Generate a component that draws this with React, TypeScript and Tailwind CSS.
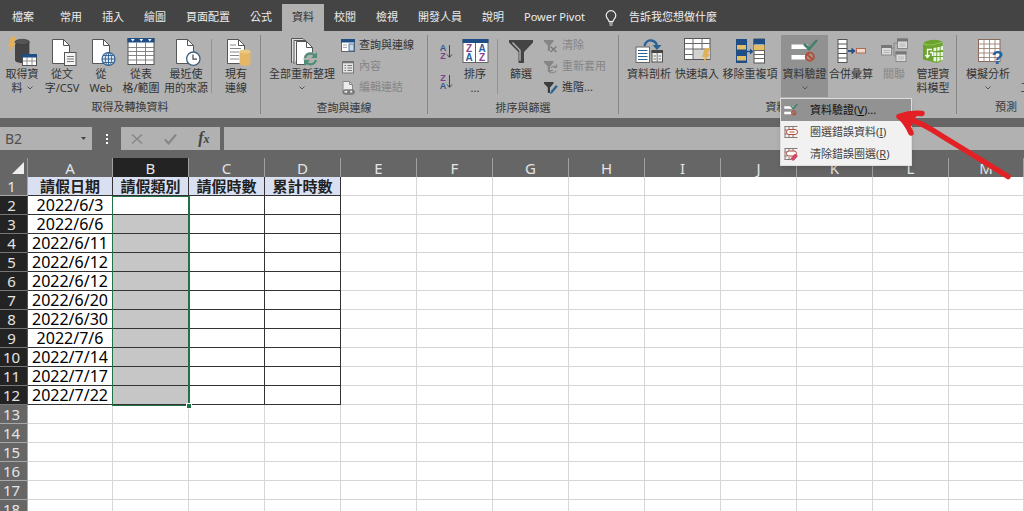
import React from 'react';
import clsx from 'clsx';

const BLUE = '#1f4e86';
const EDGE = '#555';

/* ---------- shared icon parts ---------- */

const Page = ({ x = 5, y = 2, w = 18, h = 25 }: { x?: number; y?: number; w?: number; h?: number }) => (
    <g fill="#fff" stroke={EDGE} strokeWidth="1">
        <path d={`M${x + 0.5} ${y + 0.5}h${w - 7}l6 6v${h - 7}h-${w - 1}z`} />
        <path d={`M${x + w - 6.5} ${y + 0.5}v6h6`} fill="none" />
    </g>
);

const Bolt = ({ x, y }: { x: number; y: number }) => (
    <path transform={`translate(${x} ${y})`} d="M3 0h5.5L5.5 6H8L0.5 16.5 3 9H0z" fill="#e3b155" />
);

const Big = ({ children }: { children: React.ReactNode }) => (
    <svg width="30" height="30" viewBox="0 0 30 30" className="shrink-0 overflow-visible" aria-hidden="true">
        {children}
    </svg>
);

const Small = ({ children }: { children: React.ReactNode }) => (
    <svg width="14" height="14" viewBox="0 0 14 14" className="shrink-0 overflow-visible" aria-hidden="true">
        {children}
    </svg>
);

/* ---------- large icons ---------- */

const GetDataIcon = () => (
    <Big>
        <path d="M8 5v18c0 1.8 3.2 3 7.2 3s7.2-1.2 7.2-3V5z" fill="#444" />
        <ellipse cx="15.2" cy="5" rx="7.2" ry="2.7" fill="#555" stroke="#333" strokeWidth=".6" />
        <Bolt x={1} y={0} />
        <rect x="15.5" y="17.5" width="14" height="11" fill="#fff" stroke={EDGE} />
        <rect x="15" y="17" width="15" height="3.5" fill={BLUE} />
        <path d="M20 20v8M25 20v8M16 24h13" stroke="#777" strokeWidth=".8" />
    </Big>
);

const CsvIcon = () => (
    <Big>
        <Page />
        <rect x="17.5" y="15.5" width="11.5" height="13" fill="#f4f4f4" stroke={EDGE} />
        <path d="M20 19.5h7M20 22h7M20 24.5h7" stroke="#777" />
    </Big>
);

const WebIcon = () => (
    <Big>
        <Page x={6} />
        <circle cx="22.5" cy="22" r="6.5" fill="#dfe8f0" stroke="#2c5f92" strokeWidth="1.2" />
        <path d="M16 22h13M22.5 15.5v13M17.5 18.5h10M17.5 25.5h10" stroke="#2c5f92" strokeWidth=".9" />
        <ellipse cx="22.5" cy="22" rx="3.2" ry="6.5" fill="none" stroke="#2c5f92" strokeWidth=".9" />
    </Big>
);

const TableIcon = () => (
    <Big>
        <rect x="2" y="1.5" width="26" height="26" fill="#fff" stroke={EDGE} />
        <rect x="1.5" y="1" width="27" height="4.5" fill={BLUE} />
        <path d="M5 2h3.6L6.8 4.5zM13.5 2h3.6l-1.8 2.5zM22 2h3.6l-1.8 2.5z" fill="#fff" />
        <path d="M10.5 5.5v22M19.5 5.5v22M2 10.5h26M2 14.5h26M2 18.5h26M2 23h26" stroke="#777" strokeWidth=".9" />
    </Big>
);

const RecentIcon = () => (
    <Big>
        <Page />
        <circle cx="22.3" cy="21.7" r="6.7" fill="#fff" stroke="#3f607f" strokeWidth="1.3" />
        <path d="M22 17.5v4.7h4" fill="none" stroke="#444" strokeWidth="1.2" />
    </Big>
);

const ExistingIcon = () => (
    <Big>
        <Page x={6} />
        <path d="M9 8h6M9 11.5h11M9 15h9M9 18.5h9M9 22h9" stroke="#888" />
        <path d="M18.5 14.5v12c0 1.4 2.5 2.4 5.5 2.4s5.5-1 5.5-2.4v-12z" fill="#e3b766" />
        <ellipse cx="24" cy="14.5" rx="5.5" ry="2" fill="#eac983" />
    </Big>
);

const RefreshAllIcon = () => (
    <Big>
        <path d="M4.500 26V1.500H16l3 3" fill="#ddd" stroke={EDGE} />
        <path d="M7 27V3.500h12" fill="#eee" stroke={EDGE} />
        <Page x={9} y={4} w={17} h={24} />
        <circle cx="23.5" cy="22" r="7" fill="#b1b1b1" />
        <path d="M18 21c.8-3 3-4.300 5.500-4.300 1.800 0 3 .7 4 1.800M29 23c-.8 3-3 4.300-5.500 4.300-1.800 0-3-.7-4-1.800" fill="none" stroke="#4f8f76" strokeWidth="2.2" />
        <path d="M30 15v6h-6zM17 29v-6h6z" fill="#4f8f76" />
    </Big>
);

const SortIcon = () => (
    <Big>
        <rect x="3" y="3" width="25" height="22.5" fill="#fff" stroke="#666" />
        <rect x="2.5" y="2" width="26" height="4" fill={BLUE} />
        <path d="M15.5 6v19.5" stroke="#666" />
        <g fontFamily="Liberation Sans, sans-serif" fontSize="10" fontWeight="bold" textAnchor="middle">
            <text x="9" y="14.5" fill="#8a4596">Z</text>
            <text x="9" y="23.5" fill="#2c5f9e">A</text>
            <text x="22" y="14.5" fill="#2c5f9e">A</text>
            <text x="22" y="23.5" fill="#8a4596">Z</text>
        </g>
    </Big>
);

const SortOrderIcon = ({ top, bottom }: { top: string; bottom: string }) => (
    <svg width="14" height="18" viewBox="0 0 14 18" aria-hidden="true">
        <g fontFamily="Liberation Sans, sans-serif" fontSize="9" fontWeight="bold" textAnchor="middle">
            <text x="4" y="8" fill={top === 'A' ? '#33588f' : '#7d4289'}>{top}</text>
            <text x="4" y="16" fill={bottom === 'A' ? '#33588f' : '#7d4289'}>{bottom}</text>
        </g>
        <path d="M10.5 2v12M8 11.5l2.5 2.8 2.5-2.8" fill="none" stroke="#444" />
    </svg>
);

const FilterIcon = () => (
    <Big>
        <path d="M3 3h24v2.500L18 15v11h-5.500V15L3 5.500z" fill="#444" />
        <path d="M6.500 5.500l7.500 7.800v10.500" fill="none" stroke="#b9b9b9" strokeWidth="1.3" />
    </Big>
);

const TextToColumnsIcon = () => (
    <Big>
        <path d="M10.5 9c1-4 4-6 7-5.5s5 2.5 5.500 5.500" fill="none" stroke="#2c6296" strokeWidth="2.4" />
        <path d="M18.5 8h9L23 13z" fill="#2c6296" />
        <rect x="2" y="10" width="13.5" height="15.5" fill="#fff" stroke="#666" />
        <path d="M4 13.5h9.5M4 16.5h9.5M4 19.5h9.5M4 22.5h9.5" stroke="#2c6296" />
        <rect x="18" y="14" width="10.5" height="11" fill="#eee" stroke={EDGE} />
        <rect x="17.5" y="13" width="11.5" height="3" fill="#444" />
        <path d="M23.2 16v9M19.5 19h2.5M19.5 22h2.5M24.5 19H27M24.5 22H27" stroke="#777" />
    </Big>
);

const FlashFillIcon = () => (
    <Big>
        <rect x="2.5" y="1.5" width="25.5" height="21" fill="#fff" stroke={EDGE} />
        <path d="M11 12h17v10H11z" fill="#d2d2d2" />
        <path d="M11 1.5v21M20 1.5V12M2.5 6.5H28M2.5 12H28M2.5 17.5H11" stroke="#666" />
        <Bolt x={20} y={11} />
    </Big>
);

const RemoveDuplicatesIcon = () => (
    <Big>
        <rect x="1" y="2" width="11" height="24" fill={BLUE} />
        <path d="M2 8h9v4.5H2zM2 19h9v4.5H2z" fill="#e6bd67" />
        <path d="M12 14.5h5" stroke="#1f4e86" strokeWidth="1.5" />
        <path d="M15 11.5l3.5 3-3.5 3z" fill="#1f4e86" />
        <rect x="19" y="2" width="10.5" height="24" fill="#fff" stroke="#555" />
        <rect x="18.5" y="2" width="11.5" height="5.5" fill={BLUE} />
        <path d="M19 8h10.5v5H19z" fill="#e6bd67" />
        <path d="M19 13.5h10.5M19 17.5h10.5M19 21.5h10.5" stroke="#666" />
    </Big>
);

const ValidationShape = () => (
    <>
        <path d="M1.500 7.500h16v4.500h-16zM1.500 18h14v4.500h-14z" fill="#fff" />
        <path d="M14 7l5 5 8-9" fill="none" stroke="#43806a" strokeWidth="2.6" />
        <circle cx="19.8" cy="19.8" r="4" fill="#9b9b9b" stroke="#b5503a" strokeWidth="2" />
        <path d="M17 17l5.5 5.5" stroke="#b5503a" strokeWidth="2" />
    </>
);

const ValidationIcon = () => (
    <Big>
        <ValidationShape />
    </Big>
);

const ConsolidateIcon = () => (
    <Big>
        <rect x="2" y="2.5" width="9" height="23" fill="#fff" stroke={EDGE} />
        <path d="M2 7h9M2 11.5h9M2 16.5h9M2 21h9" stroke={EDGE} />
        <path d="M12 14h5" stroke="#1f4e86" strokeWidth="1.8" />
        <path d="M15.5 10.5l4 3.5-4 3.5z" fill="#1f4e86" />
        <rect x="20.5" y="11.5" width="9" height="4.5" fill="#ecd9d0" stroke="#b8664a" />
    </Big>
);

const RelationsIcon = () => (
    <Big>
        <path d="M12 11h3V6h4M15 11v8h3" fill="none" stroke="#888" />
        {[[2.5, 8.5], [18.5, 2], [17, 15]].map(([x, y]) => (
            <g key={x}>
                <rect x={x} y={y} width="10" height="9.5" fill="#dcdcdc" stroke="#888" />
                <rect x={x - 0.5} y={y - 0.5} width="11" height="3" fill="#777" />
                <path d={`M${x + 2} ${y + 5}h6M${x + 2} ${y + 7}h6`} stroke="#b5b5b5" />
            </g>
        ))}
    </Big>
);

const DataModelIcon = () => (
    <Big>
        <path d="M5 6.500C9 2.500 19 1.500 24.500 5v4.500l.5 2v12l-6 2.500L5 22.500z" fill="#6ba32f" />
        <path d="M5 6.500c4 2.500 9 2.500 19.500-1.500" fill="none" stroke="#8fc258" strokeWidth="1.2" />
        <g fill="#eaf4e0">
            <path d="M15.500 11l2.800-.6v3.600l-2.800.3zM19.200 10.200l2.500-.5v3.700l-2.500.3zM22.600 9.500l2.400-.5v4l-2.400.3z" />
            <path d="M15.500 15.300h2.800v3.700h-2.800zM19.200 15.200h2.500v3.800h-2.500zM22.600 15h2.400v4h-2.400z" />
            <path d="M15.500 20h2.800v4.500l-2.800-.6zM19.200 20h2.500v3.800l-2.500.9zM22.600 20h2.400v3l-2.400.7z" />
        </g>
        <path d="M14 12.500H9.500V20M7.500 18l2 2.500 2-2.500M12 15.500h2.500V19" fill="none" stroke="#fff" strokeWidth="1.3" />
    </Big>
);

const WhatIfIcon = () => (
    <Big>
        <rect x="5.5" y="2.5" width="21.5" height="22" fill="#fff" stroke="#8a6a5c" />
        <path d="M11 2.5v22M16.5 2.5v22M22 2.5v22M5.5 7h21.5M5.5 11.5h21.5M5.5 16h21.5M5.5 20.5h21.5" stroke="#9c8277" strokeWidth=".9" />
        <text x="24.5" y="27" fontFamily="Liberation Sans, sans-serif" fontSize="19" fontWeight="bold" textAnchor="middle" fill="#2462a5">?</text>
    </Big>
);

const ForecastIcon = () => (
    <Big>
        <rect x="3.5" y="2.5" width="24" height="22" fill="#fff" stroke={EDGE} />
        <rect x="3" y="2" width="25" height="4" fill="#555" />
        <path d="M4 19l4-4 4 3 5-6" fill="none" stroke="#2c6296" strokeWidth="1.8" />
    </Big>
);

/* ---------- small icons ---------- */

const QueriesIcon = () => (
    <Small>
        <rect x=".5" y="1" width="13" height="11.5" fill="#fff" stroke="#666" />
        <rect x="0" y="0" width="14" height="3.5" fill={BLUE} />
        <rect x="8" y="5" width="5" height="7" fill="#c9d8e6" stroke="#2c6296" strokeWidth=".8" />
        <path d="M2 6h4M2 8.5h4" stroke="#aaa" />
    </Small>
);

const PropertiesIcon = () => (
    <Small>
        <rect x="1.5" y="1.5" width="11" height="11.5" fill="#e4e4e4" stroke="#777" />
        <path d="M1.5 2.5h11" stroke="#777" strokeWidth="1.5" />
        <path d="M3.5 5.5h1.500M3.5 8h1.500M3.5 10.5h1.500M6.5 5.5H11M6.5 8H11M6.5 10.5H11" stroke="#777" />
    </Small>
);

const EditLinksIcon = () => (
    <Small>
        <path d="M2 12V.5h6.5l3 3V12z" fill="#ececec" stroke="#888" />
        <path d="M8.5.5v3h3" fill="none" stroke="#888" />
        <g fill="none" stroke="#777" strokeWidth="1.5">
            <rect x="2.5" y="9" width="6" height="4" rx="2" />
            <rect x="7" y="9" width="6" height="4" rx="2" />
        </g>
    </Small>
);

const smallFunnel = 'M0 1h9.5v1.5L6 6.5v5.5H3.8V6.5L0 2.5z';

const ClearIcon = () => (
    <Small>
        <path d={smallFunnel} fill="#858585" />
        <path d="M6.5 7.5l6 5.5M12.5 7.5l-6 5.5" stroke="#7c7c7c" strokeWidth="1.5" />
    </Small>
);

const ReapplyIcon = () => (
    <Small>
        <path d={smallFunnel} fill="#858585" />
        <path d="M12.5 7.5c-1.5-2-4.5-1.5-5.5.5M6.5 11.5c1.5 2 5 1.5 5.5-1M12.5 4.5v3h-3M6 13.5v-3h3" fill="none" stroke="#888" strokeWidth="1.2" />
    </Small>
);

const AdvancedIcon = () => (
    <Small>
        <path d={smallFunnel} fill="#3c3c3c" />
        <path d="M6 13.5l1-3.5 5-6 1.8 1.5-5 6z" fill="#2c6296" />
    </Small>
);

const CircleInvalidIcon = () => (
    <Small>
        <path d="M.5 1.5h13M.5 12.5h13M1 1.5v11M5 1.5v3M9 1.5v3M5 10v2.5M9 10v2.5M.5 5h3M.5 9h3" fill="none" stroke="#8a7b78" />
        <rect x="2.5" y="4.5" width="11" height="5" rx="2.5" fill="#fff" stroke="#b04b3a" />
        <path d="M5.5 7h5" stroke="#b04b3a" />
    </Small>
);

const ClearCirclesIcon = () => (
    <Small>
        <path d="M.5 1.5h13M.5 12.5h7M1 1.5v11M5 1.5v3M9 1.5v3M5 10v2.5M.5 5h3M.5 9h3" fill="none" stroke="#8a7b78" />
        <rect x="2.5" y="4" width="10" height="5" rx="2.5" fill="#fff" stroke="#b04b3a" />
        <path d="M6.5 11.5l4.5-5 3 2.5-4 4.5H8z" fill="#cf4a66" />
    </Small>
);

const MenuValidationIcon = () => (
    <svg width="14" height="14" viewBox="1 1 27 27" className="shrink-0" aria-hidden="true">
        <ValidationShape />
    </svg>
);

const Chevron = () => (
    <svg width="6" height="4" viewBox="0 0 6 4" className="inline-block" aria-hidden="true">
        <path d="M.5.5L3 3 5.500.5" fill="none" stroke="#555" />
    </svg>
);

/* ---------- ribbon parts ---------- */

interface RibbonButtonProps {
    icon: React.ReactNode;
    lines: React.ReactNode[];
    width: string;
    active?: boolean;
    disabled?: boolean;
}

const RibbonButton: React.FC<RibbonButtonProps> = ({ icon, lines, width, active, disabled }) => (
    <button
        disabled={disabled}
        className={clsx(
            'flex h-[62px] shrink-0 flex-col items-center whitespace-nowrap pt-0.5 leading-[14px]',
            width,
            active && 'bg-[#919191]',
            disabled ? 'text-[#858585]' : 'text-[#333]'
        )}
    >
        {icon}
        {lines.map((line, i) => (
            <span key={i} className="flex h-3.5 items-center justify-center gap-1">{line}</span>
        ))}
    </button>
);

const SmallButton = ({ icon, label, disabled }: { icon: React.ReactNode; label: string; disabled?: boolean }) => (
    <button
        disabled={disabled}
        className={clsx('flex h-[21px] items-center gap-1 whitespace-nowrap', disabled ? 'text-[#858585]' : 'text-[#333]')}
    >
        {icon}
        <span>{label}</span>
    </button>
);

const Group = ({ title, className, children }: { title: string; className?: string; children: React.ReactNode }) => (
    <section className="flex shrink-0 flex-col">
        <div className={clsx('flex', className)}>{children}</div>
        <h2 className="text-center leading-5 text-[#383838]">{title}</h2>
    </section>
);

const GroupLine = () => <div className="mb-1 w-px shrink-0 bg-[#868686]" />;

const InnerLine = () => <div className="mb-1 mt-1 w-px shrink-0 bg-[#939393]" />;

const TABS = ['檔案', '常用', '插入', '繪圖', '頁面配置', '公式', '資料', '校閱', '檢視', '開發人員', '說明', 'Power Pivot'];

const TabBar = () => (
    <nav className="flex h-[31px] shrink-0 items-end bg-[#444] pl-0.5 text-[#ececec]">
        {TABS.map((tab, i) => (
            <button
                key={tab}
                className={clsx(
                    'h-[27px] shrink-0 whitespace-nowrap px-2.5',
                    i === 0 && 'mr-1.5',
                    tab === '資料' && 'bg-[#b1b1b1] text-[#333]'
                )}
            >
                {tab}
            </button>
        ))}
        <button className="ml-2.5 flex h-[27px] items-center gap-3 whitespace-nowrap">
            <svg width="12" height="16" viewBox="0 0 12 16" aria-hidden="true">
                <path d="M4 11.500c0-2-2.800-3-2.800-6a4.800 4.800 0 019.600 0c0 3-2.800 4-2.800 6zM4 13h4M4.500 15h3" fill="none" stroke="#f0f0f0" strokeWidth="1.2" />
            </svg>
            告訴我您想做什麼
        </button>
    </nav>
);

const Ribbon = () => (
    <div className="flex shrink-0 overflow-hidden bg-[#b1b1b1] pt-1">
        <Group title="取得及轉換資料" className="pl-px">
            <RibbonButton width="w-[42px]" icon={<GetDataIcon />} lines={['取得資', <>料 <Chevron /></>]} />
            <RibbonButton width="w-[38px]" icon={<CsvIcon />} lines={['從文', '字/CSV']} />
            <RibbonButton width="w-10" icon={<WebIcon />} lines={['從', 'Web']} />
            <RibbonButton width="w-10" icon={<TableIcon />} lines={['從表', '格/範圍']} />
            <RibbonButton width="w-[50px]" icon={<RecentIcon />} lines={['最近使', '用的來源']} />
            <InnerLine />
            <RibbonButton width="w-12" icon={<ExistingIcon />} lines={['現有', '連線']} />
        </Group>
        <GroupLine />
        <Group title="查詢與連線" className="pl-0.5 pr-[13px]">
            <RibbonButton width="w-[78px]" icon={<RefreshAllIcon />} lines={['全部重新整理', <Chevron />]} />
            <div>
                <SmallButton icon={<QueriesIcon />} label="查詢與連線" />
                <SmallButton icon={<PropertiesIcon />} label="內容" disabled />
                <SmallButton icon={<EditLinksIcon />} label="編輯連結" disabled />
            </div>
        </Group>
        <GroupLine />
        <Group title="排序與篩選" className="pl-[11px] pr-3">
            <div className="flex flex-col gap-3 pt-2">
                <button aria-label="從 A 到 Z 排序"><SortOrderIcon top="A" bottom="Z" /></button>
                <button aria-label="從 Z 到 A 排序"><SortOrderIcon top="Z" bottom="A" /></button>
            </div>
            <RibbonButton width="w-11" icon={<SortIcon />} lines={['排序', '...']} />
            <InnerLine />
            <RibbonButton width="w-[46px]" icon={<FilterIcon />} lines={['篩選']} />
            <div>
                <SmallButton icon={<ClearIcon />} label="清除" disabled />
                <SmallButton icon={<ReapplyIcon />} label="重新套用" disabled />
                <SmallButton icon={<AdvancedIcon />} label="進階..." />
            </div>
        </Group>
        <GroupLine />
        <Group title="資料工具" className="pl-1 pr-1">
            <RibbonButton width="w-[52px]" icon={<TextToColumnsIcon />} lines={['資料剖析']} />
            <RibbonButton width="w-11" icon={<FlashFillIcon />} lines={['快速填入']} />
            <RibbonButton width="w-[62px]" icon={<RemoveDuplicatesIcon />} lines={['移除重複項']} />
            <RibbonButton width="w-[47px]" icon={<ValidationIcon />} lines={['資料驗證', <Chevron />]} active />
            <RibbonButton width="w-[46px]" icon={<ConsolidateIcon />} lines={['合併彙算']} />
            <RibbonButton width="w-10" icon={<RelationsIcon />} lines={['關聯']} disabled />
            <RibbonButton width="w-[38px]" icon={<DataModelIcon />} lines={['管理資', '料模型']} />
        </Group>
        <GroupLine />
        <Group title="預測">
            <RibbonButton width="w-[62px]" icon={<WhatIfIcon />} lines={['模擬分析', <Chevron />]} />
            <RibbonButton width="w-9" icon={<ForecastIcon />} lines={['預測', '工作表']} />
        </Group>
    </div>
);

const MENU = [
    { label: '資料驗證', hotkey: 'V', tail: '...', icon: <MenuValidationIcon /> },
    { label: '圈選錯誤資料', hotkey: 'I', tail: '', icon: <CircleInvalidIcon /> },
    { label: '清除錯誤圈選', hotkey: 'R', tail: '', icon: <ClearCirclesIcon /> },
];

const ValidationMenu = () => (
    <div role="menu" className="absolute left-[780px] top-[98px] z-20 w-[132px] border border-[#dedede] bg-[#f1f1f1] shadow-md">
        {MENU.map((item, i) => (
            <button
                key={item.hotkey}
                role="menuitem"
                className={clsx(
                    'flex h-[22px] w-full items-center gap-3 whitespace-nowrap pl-[3px]',
                    i === 0 ? 'bg-[#929292] text-[#111]' : 'text-[#444]'
                )}
            >
                {item.icon}
                <span>{item.label}(<u>{item.hotkey}</u>){item.tail}</span>
            </button>
        ))}
    </div>
);

const PointerArrow = () => (
    <svg width="120" height="74" viewBox="0 0 120 74" className="absolute left-[894px] top-[108px] z-30" aria-hidden="true">
        <g fill="none" stroke="#e32124" strokeLinecap="round" strokeLinejoin="round">
            <path d="M7 9C24 13 34 19 48 28L114 68.500" strokeWidth="5.5" />
            <path d="M28 5.500C18 4.500 12 6 5 8.500 11 12 14 18 17 25" strokeWidth="5.5" />
            <path d="M8 8.500l12-1M8 9l8 7" strokeWidth="5" />
        </g>
    </svg>
);

/* ---------- formula bar ---------- */

const FormulaBar = () => (
    <div className="flex shrink-0 items-stretch bg-[#666] pb-2 pt-[9px] text-[#3c3c3c]">
        <div className="flex h-[23px] w-[92px] items-center bg-[#b1b1b1]">
            <input aria-label="名稱方塊" defaultValue="B2" className="min-w-0 flex-1 bg-transparent pl-[5px] text-sm text-[#505050] outline-none" />
            <button aria-label="展開名稱方塊" className="px-1.5">
                <svg width="5" height="3" viewBox="0 0 5 3" aria-hidden="true"><path d="M0 0h5L2.500 3z" fill="#444" /></svg>
            </button>
        </div>
        <div className="flex w-[29px] flex-col items-center justify-center gap-0.5">
            <i className="size-0.5 bg-white" />
            <i className="size-0.5 bg-white" />
            <i className="size-0.5 bg-white" />
        </div>
        <div className="mr-1 flex w-[99px] items-center justify-around bg-[#b1b1b1]">
            <button aria-label="取消">
                <svg width="12" height="12" viewBox="0 0 12 12" aria-hidden="true"><path d="M1 1.5l10 9M11 1.5L1 10.5" stroke="#858585" strokeWidth="1.4" /></svg>
            </button>
            <button aria-label="輸入">
                <svg width="13" height="12" viewBox="0 0 13 12" aria-hidden="true"><path d="M1 6.5l3.5 4L12 1.5" fill="none" stroke="#858585" strokeWidth="2" /></svg>
            </button>
            <button aria-label="插入函數" className="font-['Liberation_Serif',serif] text-base font-bold italic leading-none text-[#444]">
                f<span className="text-xs">x</span>
            </button>
        </div>
        <input aria-label="資料編輯列" className="min-w-0 flex-1 bg-[#b1b1b1] px-2 text-sm outline-none" />
    </div>
);

/* ---------- sheet ---------- */

const COLUMNS = 'ABCDEFGHIJKLM'.split('');
const HEADINGS = ['請假日期', '請假類別', '請假時數', '累計時數'];
const DATES = [
    '2022/6/3', '2022/6/6', '2022/6/11', '2022/6/12', '2022/6/12', '2022/6/20',
    '2022/6/30', '2022/7/6', '2022/7/14', '2022/7/17', '2022/7/22',
];
const LAST_ROW = DATES.length + 1;

const cellText = (row: number, col: number) => {
    if (row === 1) return HEADINGS[col] ?? '';
    return col === 0 ? DATES[row - 2] ?? '' : '';
};

const Sheet = () => (
    <main className="relative min-h-0 flex-1 overflow-hidden bg-white">
        <table className="w-full table-fixed border-separate border-spacing-0 text-center leading-[18px] text-black">
            <colgroup>
                <col className="w-7" />
                <col className="w-[85px]" />
                {COLUMNS.slice(1, -1).map(c => <col key={c} className="w-[76px]" />)}
                <col />
            </colgroup>
            <thead>
                <tr className="h-[19px] bg-[#666] text-[15px] text-[#e4e4e4]">
                    <th className="border-r border-[#999] p-0">
                        <svg width="14" height="14" viewBox="0 0 14 14" className="ml-auto mr-0.5" aria-hidden="true"><path d="M13 1v12H1z" fill="#eee" /></svg>
                    </th>
                    {COLUMNS.map(c => (
                        <th key={c} className={clsx('border-r border-[#a0a0a0] p-0 font-normal', c === 'B' && 'bg-[#232323]')}>{c}</th>
                    ))}
                </tr>
            </thead>
            <tbody>
                {Array.from({ length: 18 }, (_, i) => i + 1).map(row => (
                    <tr key={row} className="h-[19px]">
                        <th
                            className={clsx(
                                'border-b border-r p-0 pr-1 text-[15px] font-normal text-[#e4e4e4]',
                                row > 1 && row <= LAST_ROW ? 'border-b-[#777] border-r-[#217346] bg-[#232323]' : 'border-[#a8a8a8] bg-[#666]'
                            )}
                        >
                            {row}
                        </th>
                        {COLUMNS.map((c, col) => {
                            const inTable = row <= LAST_ROW && col < 4;
                            return (
                                <td
                                    key={c}
                                    className={clsx(
                                        'whitespace-nowrap border-b border-r p-0',
                                        inTable ? 'border-[#333]' : 'border-[#d6d6d6]',
                                        row === 1 ? 'text-[15px] font-bold' : 'text-base leading-[18px]',
                                        row === 1 && inTable && 'bg-[#d9e0f2] text-[#222]',
                                        c === 'B' && row > 2 && row <= LAST_ROW && 'bg-[#c6c6c6]'
                                    )}
                                >
                                    {cellText(row, col)}
                                </td>
                            );
                        })}
                    </tr>
                ))}
            </tbody>
        </table>
        {/* selection frame round B2:B12 */}
        <div className="absolute left-[112px] top-[38px] h-[210px] w-[78px] border border-r-2 border-[#217346]">
            <i className="absolute -bottom-[3px] -right-[3px] size-1 bg-[#217346] outline outline-white" />
        </div>
    </main>
);

const App: React.FC = () => (
    <div className="relative flex h-screen flex-col overflow-hidden bg-[#666] font-['Noto_Sans','Noto_Sans_CJK_TC',sans-serif] text-[11px]">
        <TabBar />
        <Ribbon />
        <FormulaBar />
        <Sheet />
        <ValidationMenu />
        <PointerArrow />
    </div>
);

export default App;
